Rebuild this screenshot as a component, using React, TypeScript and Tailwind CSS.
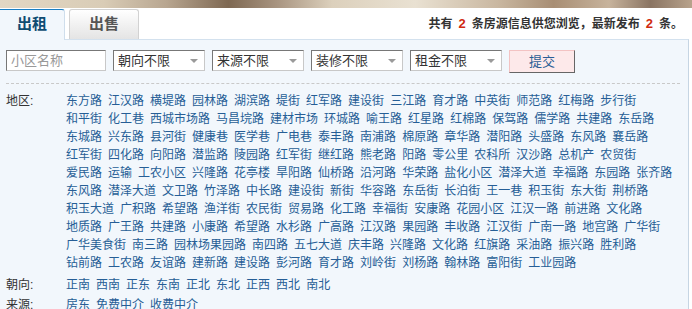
const areas = [
  "东方路", "江汉路", "横堤路", "园林路", "湖滨路", "堤街", "红军路", "建设街", "三江路", "育才路", "中英街", "师范路", "红梅路", "步行街",
  "和平街", "化工巷", "西城市场路", "马昌垸路", "建材市场", "环城路", "喻王路", "红星路", "红棉路", "保驾路", "儒学路", "共建路", "东岳路",
  "东城路", "兴东路", "县河街", "健康巷", "医学巷", "广电巷", "泰丰路", "南浦路", "棉原路", "章华路", "潜阳路", "头盛路", "东风路", "襄岳路",
  "红军街", "四化路", "向阳路", "潜监路", "陵园路", "红军街", "继红路", "熊老路", "阳路", "零公里", "农科所", "汉沙路", "总机产", "农贸街",
  "爱民路", "运输", "工农小区", "兴隆路", "花亭楼", "旱阳路", "仙桥路", "沿河路", "华荣路", "盐化小区", "潜泽大道", "幸福路", "东园路", "张齐路",
  "东风路", "潜泽大道", "文卫路", "竹泽路", "中长路", "建设街", "新街", "华容路", "东岳街", "长泊街", "王一巷", "积玉街", "东大街", "荆桥路",
  "积玉大道", "广积路", "希望路", "渔洋街", "农民街", "贸易路", "化工路", "幸福街", "安康路", "花园小区", "江汉一路", "前进路", "文化路",
  "地质路", "广王路", "共建路", "小康路", "希望路", "水杉路", "广高路", "江汉路", "果园路", "丰收路", "江汉街", "广南一路", "地宫路", "广华街",
  "广华美食街", "南三路", "园林场果园路", "南四路", "五七大道", "庆丰路", "兴隆路", "文化路", "红旗路", "采油路", "振兴路", "胜利路",
  "钻前路", "工农路", "友谊路", "建新路", "建设路", "彭河路", "育才路", "刘岭街", "刘杨路", "翰林路", "富阳街", "工业园路",
];

const directions = ["正南", "西南", "正东", "东南", "正北", "东北", "正西", "西北", "南北"];
const sources = ["房东", "免费中介", "收费中介"];

function FakeSelect({ label }: { label: string }) {
  return (
    <div className="flex items-center justify-between w-[92px] h-[21px] pl-[4px] pr-[6px] bg-white border border-t-[#777] border-l-[#777] border-r-[#c8c8c8] border-b-[#c8c8c8] text-[13px] text-[#333]">
      <span>{label}</span>
      <span className="w-0 h-0 border-l-[4px] border-r-[4px] border-t-[4px] border-l-transparent border-r-transparent border-t-[#9a9a9a]" />
    </div>
  );
}

function Section({ label, items, className }: { label: string; items: string[]; className?: string }) {
  return (
    <div className={"flex " + (className ?? "")}>
      <div className="w-[60px] shrink-0 leading-[18px] text-[12px] text-[#333]">{label}</div>
      <div className="flex flex-wrap w-[614px]">
        {items.map((t, i) => (
          <a key={i} href="#" className="mr-[6px] leading-[18px] text-[12px] text-[#265e96] whitespace-nowrap">
            {t}
          </a>
        ))}
      </div>
    </div>
  );
}

export default function App() {
  return (
    <div className="w-[692px] h-[309px] overflow-hidden bg-white font-['Liberation_Sans','Noto_Sans_CJK_SC',sans-serif]">
      {/* blurred photo strip at the very top */}
      <div className="h-[8px] w-full bg-[linear-gradient(90deg,#e2d7c4_0%,#d9ccb6_15%,#b8a690_24%,#7e6852_33%,#a89480_40%,#dcd0bc_48%,#e9e1d2_60%,#c9b7a0_72%,#a88e74_80%,#c7b39c_88%,#8a7462_94%,#b8a38c_100%)]" />

      {/* tabs + summary */}
      <div className="flex items-end h-[31px] w-[689px]">
        <div className="relative z-10 flex items-center justify-center w-[65px] h-[31px] -mb-[1px] pb-[1px] bg-[#f2f7fc] border-t border-t-[#1b7fc4] border-r border-r-[#cfdeec] rounded-tr-[3px] text-[15px] font-bold text-[#0f4c72]">
          出租
        </div>
        <div className="flex items-center justify-center w-[70px] h-[30px] ml-[4px] bg-[linear-gradient(180deg,#ffffff_0%,#f4f4f4_40%,#e4e4e4_100%)] border border-b-0 border-[#d2d2d2] rounded-t-[3px] text-[15px] font-bold text-[#555]">
          出售
        </div>
        <div className="flex-1 self-center text-right pr-[6px] text-[12px] font-bold text-[#333]">
          共有<span className="mx-[6px] text-[13px] text-[#d02a10]">2</span>条房源信息供您浏览，最新发布<span className="mx-[6px] text-[13px] text-[#d02a10]">2</span>条。
        </div>
      </div>

      {/* search panel */}
      <div className="w-[689px] h-[280px] bg-[#f2f7fc] border-t border-t-[#d3e1ee] border-r border-r-[#c6d5e3] pl-[6px] pr-[8px] pt-[10px]">
        <div className="flex items-start gap-[7px]">
          <div className="flex items-center w-[100px] h-[21px] pl-[4px] bg-white border border-t-[#777] border-l-[#777] border-r-[#c8c8c8] border-b-[#c8c8c8] text-[13px] text-[#999]">
            小区名称
          </div>
          <FakeSelect label="朝向不限" />
          <FakeSelect label="来源不限" />
          <FakeSelect label="装修不限" />
          <FakeSelect label="租金不限" />
          <button className="w-[66px] h-[23px] bg-[#fde9ea] border border-t-[#f3c3c3] border-l-[#f3c3c3] border-r-[#666] border-b-[#666] text-[13px] text-[#2a5d95]">
            提交
          </button>
        </div>

        <div className="mt-[10px] border-t border-dashed border-[#c9c9c9]" />

        <div className="pt-[8px]">
          <Section label="地区:" items={areas} className="mb-[4px]" />
          <Section label="朝向:" items={directions} className="mb-[2px]" />
          <Section label="来源:" items={sources} />
        </div>
      </div>
    </div>
  );
}
